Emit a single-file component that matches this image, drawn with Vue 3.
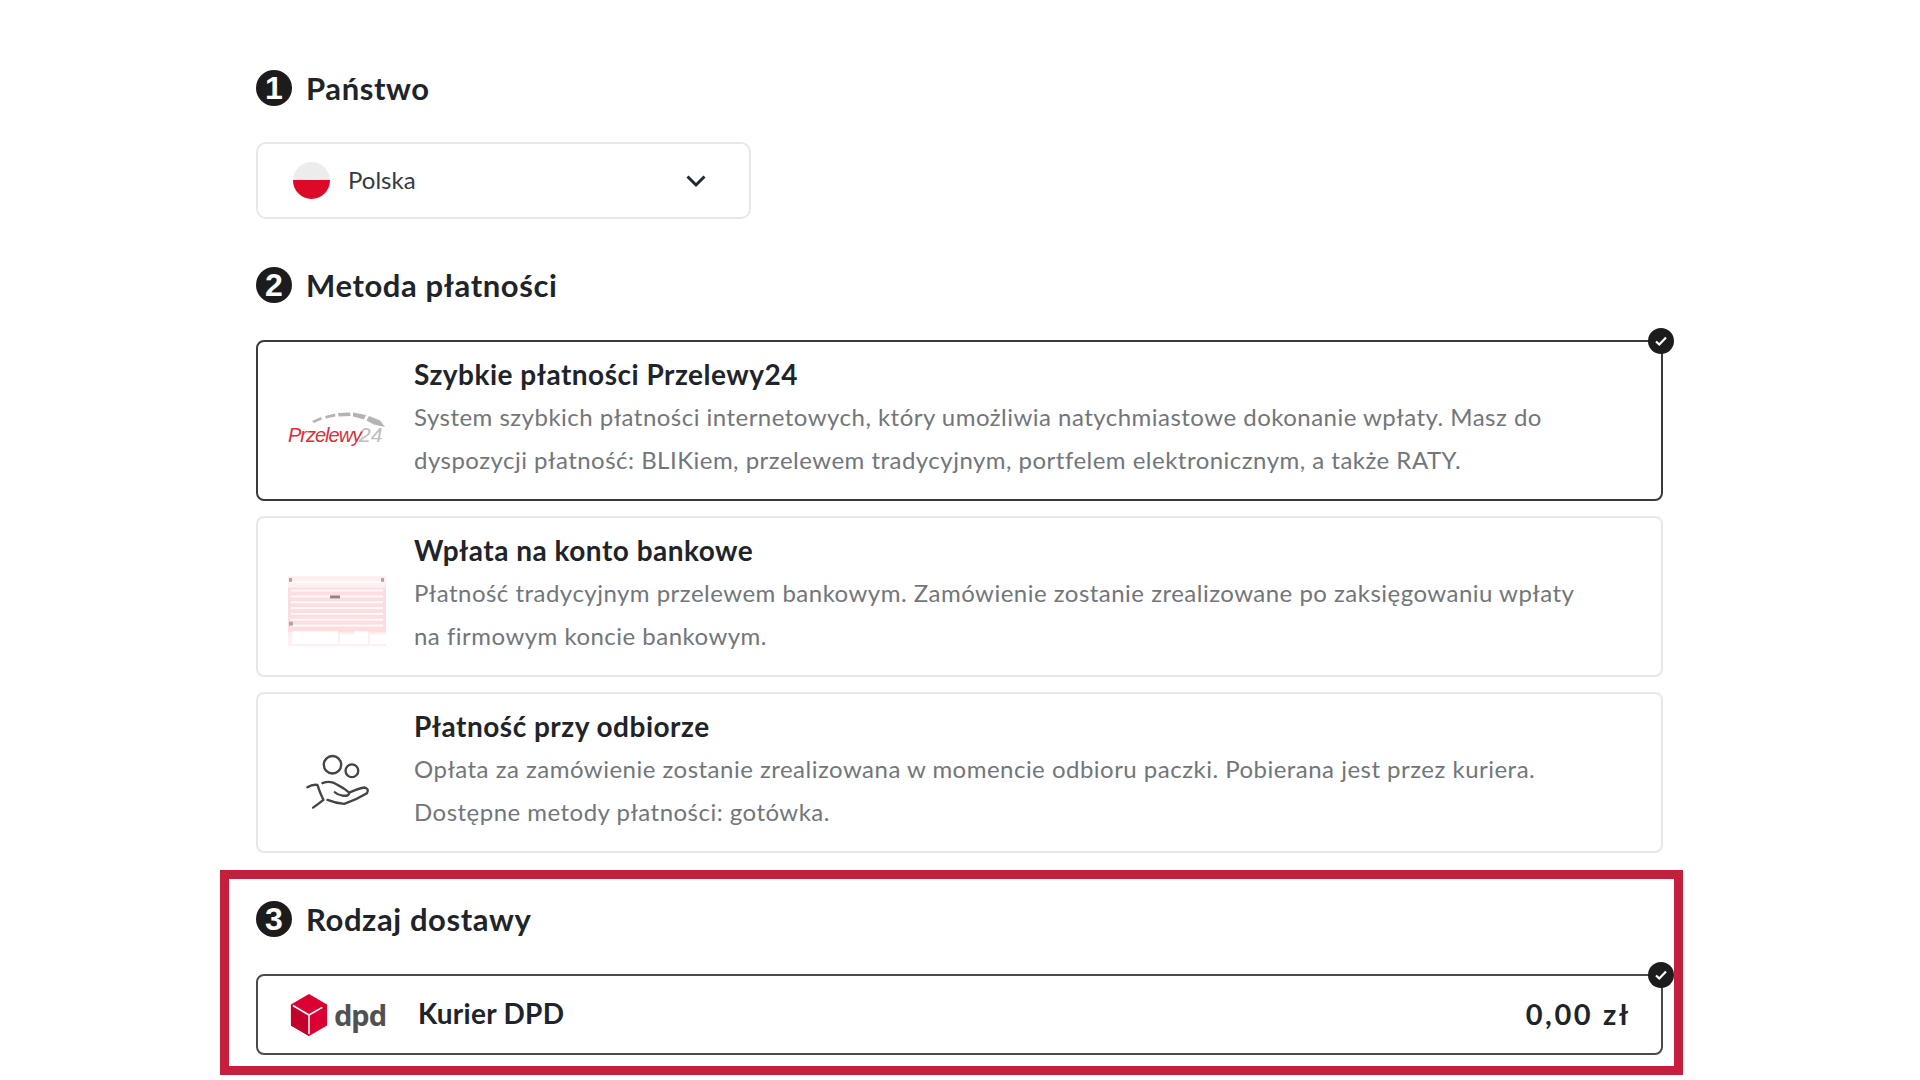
<script setup>
const methods = [
  { id: 'p24', title: 'Szybkie płatności Przelewy24', lines: ['System szybkich płatności internetowych, który umożliwia natychmiastowe dokonanie wpłaty. Masz do', 'dyspozycji płatność: BLIKiem, przelewem tradycyjnym, portfelem elektronicznym, a także RATY.'], active: true },
  { id: 'bank', title: 'Wpłata na konto bankowe', lines: ['Płatność tradycyjnym przelewem bankowym. Zamówienie zostanie zrealizowane po zaksięgowaniu wpłaty', 'na firmowym koncie bankowym.'] },
  { id: 'cod', title: 'Płatność przy odbiorze', lines: ['Opłata za zamówienie zostanie zrealizowana w momencie odbioru paczki. Pobierana jest przez kuriera.', 'Dostępne metody płatności: gotówka.'] },
]
const bankRows = [5, 14, 20, 26, 32, 38, 44, 50]
</script>

<template>
  <main class="page">
    <h2 class="heading"><span class="num">1</span>Państwo</h2>
    <div class="select">
      <span class="flag"></span>
      <span class="country">Polska</span>
      <svg class="chev" width="22" height="14" viewBox="0 0 22 14"><path d="M2.500 2.500 11 11l8.500-8.500" fill="none" stroke="#1f2a33" stroke-width="3"/></svg>
    </div>

    <h2 class="heading second"><span class="num">2</span>Metoda płatności</h2>
    <div class="methods">
      <article v-for="m in methods" :key="m.id" class="method" :class="{ active: m.active }">
        <div class="logo">
          <svg v-if="m.id === 'p24'" width="98" height="42" viewBox="0 0 98 42">
            <g fill="#b4b4b4">
              <path d="M24 13 33 9 34 11.500 26 15z"/>
              <path d="M37 8 47 5.500 47.500 8.500 38 10.500z"/>
              <path d="M50 5 62 4.500 62.500 8 50.500 8.500z"/>
              <path d="M65 4.500 78 7 76 11.500 65 8.500z"/>
              <path d="M81 8 92 12.500 97 19 86 16.500 78.500 12.500z"/>
            </g>
            <text x="0" y="34" class="p24red">Przelewy</text>
            <text x="71" y="34" class="p24grey">24</text>
          </svg>
          <svg v-else-if="m.id === 'bank'" class="bank" width="98" height="70" viewBox="0 0 98 72" preserveAspectRatio="none">
            <rect x="0" y="0" width="98" height="72" fill="#feeff0"/>
            <rect x="0" y="12" width="98" height="46" fill="#fcdde0"/>
            <rect v-for="r in bankRows" :key="r" x="3" :y="r" width="92" height="2" fill="#fff" opacity="0.8"/>
            <rect x="1" y="2" width="3" height="4" fill="#a8a8a8"/><rect x="93" y="2" width="3" height="4" fill="#a8a8a8"/>
            <rect x="1" y="47" width="4" height="4" fill="#a8a8a8"/>
            <rect x="42" y="20" width="10" height="3" fill="#8f8585"/>
            <rect x="4" y="57" width="46" height="13" fill="#fff"/>
            <rect x="52" y="60" width="14" height="10" fill="#fff"/>
            <rect x="66" y="57" width="14" height="13" fill="#fff"/>
            <rect x="82" y="60" width="16" height="10" fill="#fff"/>
          </svg>
          <svg v-else class="hand" width="67" height="57" viewBox="70 45 200 170" fill="none" stroke="#444" stroke-width="7" stroke-linecap="round" stroke-linejoin="round">
            <circle cx="155" cy="80" r="26"/>
            <circle cx="213" cy="98" r="19"/>
            <path d="M80 147Q95 138 110 140 118 165 128 185 112 198 97 208"/>
            <path d="M125 135Q150 125 170 140 190 150 205 163 205 175 185 172 170 170 162 162"/>
            <path d="M205 163Q235 150 252 148 265 152 258 165 225 185 190 197 165 195 140 185"/>
          </svg>
        </div>
        <div class="body">
          <h3 class="title">{{ m.title }}</h3>
          <p v-for="l in m.lines" :key="l" class="desc">{{ l }}</p>
        </div>
        <span v-if="m.active" class="check"><svg width="14" height="12" viewBox="0 0 14 12"><path d="M2 6.500 5.300 9.500 12 2.500" fill="none" stroke="#fff" stroke-width="2.200"/></svg></span>
      </article>
    </div>

    <section class="delivery">
      <h2 class="heading"><span class="num">3</span>Rodzaj dostawy</h2>
      <div class="courier">
        <svg class="dpd" width="38" height="42" viewBox="0 0 40 44">
          <path d="M20 0 39 11v22L20 44 1 33V11z" fill="#dc0032"/>
          <path d="M1 11v22l19 11V24z" fill="#c4002c"/>
          <path d="M3 12 20 22 34 14M20 22v20" fill="none" stroke="#fff" stroke-width="1.600"/>
        </svg>
        <span class="dpdtext">dpd</span>
        <span class="cname">Kurier DPD</span>
        <span class="price">0,00 zł</span>
        <span class="check"><svg width="14" height="12" viewBox="0 0 14 12"><path d="M2 6.500 5.300 9.500 12 2.500" fill="none" stroke="#fff" stroke-width="2.200"/></svg></span>
      </div>
    </section>
  </main>
</template>

<style>
html, body { background: #fff; margin: 0; }
</style>

<style scoped>
.page {
  box-sizing: border-box;
  width: 1920px;
  height: 1080px;
  overflow: hidden;
  padding: 69px 0 0 256px;
  font-family: Lato, "Noto Sans", sans-serif;
  color: #1e2429;
}
.heading {
  display: flex;
  align-items: center;
  gap: 14px;
  margin: 0;
  height: 38px;
  font-size: 31px;
  font-weight: 700;
  letter-spacing: 0.6px;
  color: #1e2429;
}
.second { margin-top: 47px; }
.num {
  width: 36px;
  height: 36px;
  border-radius: 50%;
  background: #1c1c1c;
  color: #fff;
  font: 700 32px/36px "Liberation Sans", sans-serif;
  letter-spacing: 0;
  text-align: center;
}
.select {
  box-sizing: border-box;
  display: flex;
  align-items: center;
  width: 495px;
  height: 77px;
  margin-top: 35px;
  padding: 0 42px 0 35px;
  border: 2px solid #e8e8e8;
  border-radius: 10px;
}
.flag {
  width: 37px;
  height: 37px;
  border-radius: 50%;
  background: linear-gradient(#ececec 50%, #dc0a28 50%);
}
.country { margin: 0 0 2px 18px; font-size: 24px; color: #333a41; flex: 1; }
.methods {
  display: flex;
  flex-direction: column;
  gap: 15px;
  width: 1407px;
  margin-top: 36px;
}
.method {
  position: relative;
  box-sizing: border-box;
  display: flex;
  height: 161px;
  padding: 0 0 0 30px;
  border: 2px solid #e8e8e8;
  border-radius: 8px;
}
.method.active { border-color: #3a3a3a; }
.logo {
  flex: none;
  width: 126px;
  height: 100%;
  padding-top: 16px;
  box-sizing: border-box;
  display: flex;
  align-items: center;
}
.bank { margin-top: 13px; }
.hand { margin: 2px 0 0 16px; }
.title {
  margin: 15px 0 0;
  font-size: 28px;
  line-height: 34px;
  font-weight: 700;
  letter-spacing: 0.5px;
  color: #1e2429;
}
.desc {
  margin: 0;
  font-size: 24px;
  line-height: 43px;
  letter-spacing: 0.48px;
  color: #71767a;
  white-space: nowrap;
}
.title + .desc { margin-top: 4px; }
.check {
  position: absolute;
  top: -14px;
  right: -13px;
  width: 26px;
  height: 26px;
  border-radius: 50%;
  background: #1c1c1c;
  display: flex;
  align-items: center;
  justify-content: center;
}
.p24red { font: italic 400 20px "Liberation Sans", sans-serif; fill: #d6303c; letter-spacing: -1px; }
.p24grey { font: italic 400 21px "Liberation Sans", sans-serif; fill: #bdbdbd; }
.delivery {
  box-sizing: border-box;
  width: 1463px;
  height: 205px;
  margin: 17px 0 0 -36px;
  padding: 21px 0 0 27px;
  border: 9px solid #c4203e;
}
.courier {
  position: relative;
  box-sizing: border-box;
  display: flex;
  align-items: center;
  width: 1407px;
  height: 81px;
  margin-top: 36px;
  padding: 0 30px 0 32px;
  border: 2px solid #4a4a4a;
  border-radius: 8px;
}
.dpdtext { margin-left: 6px; font: 700 29px "Noto Sans", sans-serif; color: #515151; letter-spacing: -1px; }
.cname { margin: 0 0 3px 32px; flex: 1; font-size: 28px; font-weight: 700; letter-spacing: 0.3px; color: #1e2429; }
.price { margin-bottom: 3px; font-size: 29px; font-weight: 700; letter-spacing: 2.600px; color: #1e2429; }
</style>
